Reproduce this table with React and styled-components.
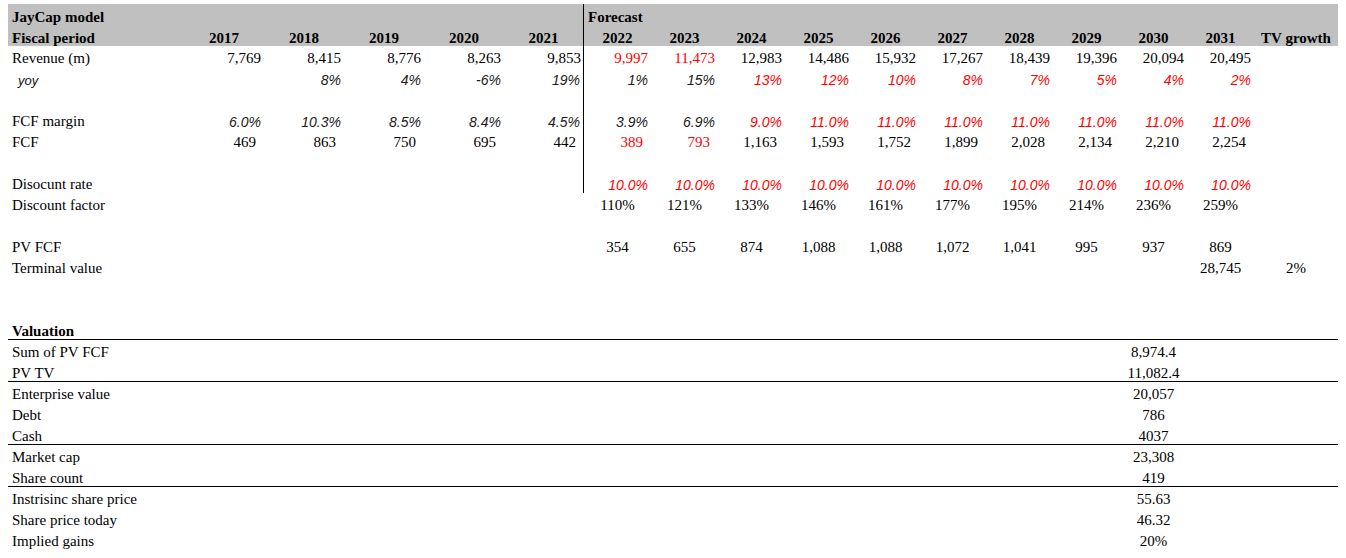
import React from 'react';
import styled, { createGlobalStyle } from 'styled-components';

const GlobalStyle = createGlobalStyle`
  html, body { margin: 0; padding: 0; background: #ffffff; }
  body {
    font-family: "Liberation Serif", "Times New Roman", serif;
    color: #000000;
  }
`;

const COLS = '176px repeat(5, 80px) repeat(10, 67px) 84px';

const Page = styled.div`
  padding: 4px 0 0 8px;
`;

const Sheet = styled.div`
  width: 1330px;
  display: flex;
  flex-direction: column;
`;

const Line = styled.div`
  display: grid;
  grid-template-columns: ${COLS};
  height: 21px;
  box-sizing: border-box;
  background: ${(p) => (p.$band ? '#c0c0c0' : 'transparent')};
  box-shadow: ${(p) => (p.$rule ? 'inset 0 -1px 0 #000' : 'none')};
`;

const CellBase = styled.div`
  display: flex;
  align-items: flex-end;
  box-sizing: border-box;
  white-space: nowrap;
  min-width: 0;
  overflow: visible;
  border-right: ${(p) => (p.$divider ? '1px solid #000' : 'none')};
`;

const Label = styled(CellBase)`
  font-size: 15px;
  line-height: 17px;
  padding-left: 4px;
  font-weight: ${(p) => (p.$bold ? 700 : 400)};
  padding-bottom: ${(p) => (p.$bold ? 0 : 0)}px;
  margin-bottom: ${(p) => (p.$lift ? -1 : 0)}px;
`;

const ScriptLabel = styled(CellBase)`
  font-family: "Liberation Sans", Arial, sans-serif;
  font-style: italic;
  font-size: 13px;
  line-height: 17px;
  padding-left: 10px;
  margin-bottom: -1px;
  color: #111;
`;

const Heading = styled(CellBase)`
  font-size: 15px;
  line-height: 17px;
  font-weight: 700;
  margin-bottom: -1px;
  justify-content: ${(p) => (p.$left ? 'flex-start' : 'center')};
  padding-left: ${(p) => (p.$left ? 4 : 0)}px;
`;

const Value = styled(CellBase)`
  font-size: 15px;
  line-height: 17px;
  color: ${(p) => (p.$red ? '#ff0000' : '#000')};
  justify-content: ${(p) => (p.$center ? 'center' : 'flex-end')};
  padding-right: ${(p) => (p.$center ? 0 : p.$pad)}px;
`;

const Ratio = styled(CellBase)`
  font-family: "Liberation Sans", Arial, sans-serif;
  font-style: italic;
  font-size: 14px;
  line-height: 17px;
  margin-bottom: -1px;
  justify-content: flex-end;
  padding-right: 3px;
  color: ${(p) => (p.$red ? '#ff0000' : '#1a1a1a')};
`;

const Empty = styled(CellBase)``;

const N = null;
const rep = (v, n) => Array.from({ length: n }, () => v);
const range = (a, b) => Array.from({ length: b - a + 1 }, (_, i) => a + i);

const series = (vals, type, reds = []) =>
  vals.map((t, i) => (t == null ? null : { t, type, red: reds.includes(i) }));

const years = ['2017', '2018', '2019', '2020', '2021', '2022', '2023', '2024', '2025', '2026', '2027', '2028', '2029', '2030', '2031', 'TV growth'];

const valAt = (t) => {
  const arr = rep(N, 16);
  arr[13] = t;
  return series(arr, 'center');
};

const rows = [
  { band: true, label: 'JayCap model', bold: true, lift: true, divider: true, cells: series([...rep(N, 5), 'Forecast', ...rep(N, 10)], 'headLeft') },
  { band: true, label: 'Fiscal period', bold: true, lift: true, divider: true, cells: series(years, 'head') },
  {
    label: 'Revenue (m)', divider: true,
    cells: series(['7,769', '8,415', '8,776', '8,263', '9,853', '9,997', '11,473', '12,983', '14,486', '15,932', '17,267', '18,439', '19,396', '20,094', '20,495', N], 'num', [5, 6]),
  },
  {
    label: 'yoy', script: true, divider: true,
    cells: series([N, '8%', '4%', '-6%', '19%', '1%', '15%', '13%', '12%', '10%', '8%', '7%', '5%', '4%', '2%', N], 'pct', range(7, 14)),
  },
  { label: '', divider: true, cells: rep(N, 16) },
  {
    label: 'FCF margin', divider: true,
    cells: series(['6.0%', '10.3%', '8.5%', '8.4%', '4.5%', '3.9%', '6.9%', '9.0%', ...rep('11.0%', 7), N], 'pct', range(7, 14)),
  },
  {
    label: 'FCF', divider: true,
    cells: series(['469', '863', '750', '695', '442', '389', '793', '1,163', '1,593', '1,752', '1,899', '2,028', '2,134', '2,210', '2,254', N], 'fcf', [5, 6]),
  },
  { label: '', divider: true, cells: rep(N, 16) },
  {
    label: 'Disocunt rate', divider: true,
    cells: series([...rep(N, 5), ...rep('10.0%', 10), N], 'pct', range(5, 14)),
  },
  {
    label: 'Discount factor',
    cells: series([...rep(N, 5), '110%', '121%', '133%', '146%', '161%', '177%', '195%', '214%', '236%', '259%', N], 'center'),
  },
  { label: '', cells: rep(N, 16) },
  {
    label: 'PV FCF',
    cells: series([...rep(N, 5), '354', '655', '874', '1,088', '1,088', '1,072', '1,041', '995', '937', '869', N], 'center'),
  },
  {
    label: 'Terminal value',
    cells: series([...rep(N, 14), '28,745', '2%'], 'center'),
  },
  { label: '', cells: rep(N, 16) },
  { label: '', cells: rep(N, 16) },
  { label: 'Valuation', bold: true, rule: true, cells: rep(N, 16) },
  { label: 'Sum of PV FCF', cells: valAt('8,974.4') },
  { label: 'PV TV', rule: true, cells: valAt('11,082.4') },
  { label: 'Enterprise value', cells: valAt('20,057') },
  { label: 'Debt', cells: valAt('786') },
  { label: 'Cash', rule: true, cells: valAt('4037') },
  { label: 'Market cap', cells: valAt('23,308') },
  { label: 'Share count', rule: true, cells: valAt('419') },
  { label: 'Instrisinc share price', cells: valAt('55.63') },
  { label: 'Share price today', cells: valAt('46.32') },
  { label: 'Implied gains', cells: valAt('20%') },
];

function renderCell(c, i, divider) {
  const div = divider && i === 4;
  if (!c) return <Empty key={i} $divider={div} />;
  switch (c.type) {
    case 'head':
      return <Heading key={i} $divider={div}>{c.t}</Heading>;
    case 'headLeft':
      return <Heading key={i} $left $divider={div}>{c.t}</Heading>;
    case 'num':
      return <Value key={i} $pad={div ? 2 : 3} $red={c.red} $divider={div}>{c.t}</Value>;
    case 'fcf':
      return <Value key={i} $pad={div ? 7 : 8} $red={c.red} $divider={div}>{c.t}</Value>;
    case 'pct':
      return <Ratio key={i} $red={c.red} $divider={div}>{c.t}</Ratio>;
    case 'center':
    default:
      return <Value key={i} $center $red={c.red} $divider={div}>{c.t}</Value>;
  }
}

export default function App() {
  return (
    <Page>
      <GlobalStyle />
      <Sheet>
        {rows.map((r, ri) => (
          <Line key={ri} $band={r.band} $rule={r.rule}>
            {r.script ? (
              <ScriptLabel>{r.label}</ScriptLabel>
            ) : (
              <Label $bold={r.bold} $lift={r.lift}>{r.label}</Label>
            )}
            {r.cells.map((c, i) => renderCell(c, i, r.divider))}
          </Line>
        ))}
      </Sheet>
    </Page>
  );
}
